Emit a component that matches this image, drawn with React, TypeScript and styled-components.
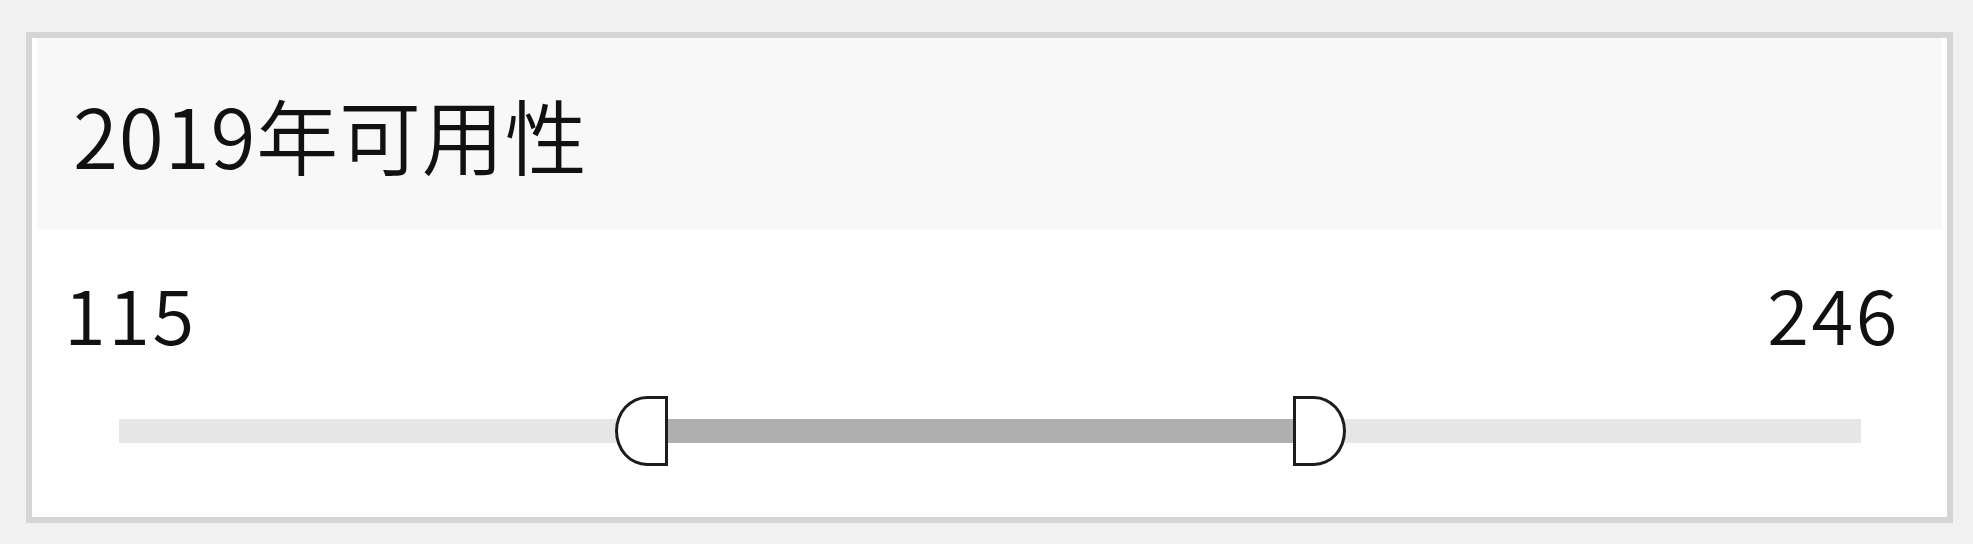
import React from "react";
import styled, { createGlobalStyle } from "styled-components";

const GlobalStyle = createGlobalStyle`
  html, body {
    margin: 0;
    padding: 0;
    background: #f1f1f1;
  }
  body {
    font-family: "Noto Sans CJK SC", "Noto Sans", sans-serif;
    color: #1a1a1a;
  }
`;

const Page = styled.div`
  padding: 32px 20px 21px 26px;
`;

const Panel = styled.section`
  box-sizing: border-box;
  width: 1927px;
  height: 491px;
  border: 6px solid #d5d5d5;
  background: #ffffff;
  padding: 0 5px;
  display: flex;
  flex-direction: column;
`;

const Header = styled.header`
  height: 191px;
  background: #f8f8f8;
  display: flex;
  align-items: center;
  padding-left: 36px;
`;

const Title = styled.h1`
  margin: 0;
  font-family: "Noto Sans CJK SC", sans-serif;
  font-weight: 350;
  font-size: 82px;
  line-height: 1;
  letter-spacing: 0.8px;
  color: #111111;
`;

const Body = styled.div`
  flex: 1;
  padding: 45px 42px 0 27px;
  display: flex;
  flex-direction: column;
`;

const Labels = styled.div`
  display: flex;
  justify-content: space-between;
  align-items: flex-start;
`;

const Value = styled.span`
  font-family: "Noto Sans CJK SC", sans-serif;
  font-weight: 350;
  font-size: 76px;
  line-height: 76px;
  letter-spacing: 2.5px;
  color: #111111;
`;

const SliderArea = styled.div`
  position: relative;
  height: 70px;
  margin: 46px 39px 0 55px;
  display: flex;
  align-items: center;
`;

const Track = styled.div`
  position: relative;
  width: 100%;
  height: 24px;
  background: #e6e6e6;
`;

const Range = styled.div`
  position: absolute;
  top: 0;
  bottom: 0;
  background: #afafaf;
`;

const Handle = styled.div<{ $side: "left" | "right" }>`
  position: absolute;
  top: 0;
  box-sizing: border-box;
  width: 53px;
  height: 70px;
  background: #ffffff;
  border: 3px solid #1c1c1c;
  border-radius: ${(p) =>
    p.$side === "left"
      ? "32px 0 0 32px / 35px 0 0 35px"
      : "0 32px 32px 0 / 0 35px 35px 0"};
`;

const data = { min: 115, max: 246, low: 0.3152, high: 0.6739 };

export default function App() {
  const lowPct = data.low * 100;
  const highPct = data.high * 100;
  return (
    <Page>
      <GlobalStyle />
      <Panel>
        <Header>
          <Title>2019年可用性</Title>
        </Header>
        <Body>
          <Labels>
            <Value>{data.min}</Value>
            <Value>{data.max}</Value>
          </Labels>
          <SliderArea>
            <Track>
              <Range style={{ left: `${lowPct}%`, width: `${highPct - lowPct}%` }} />
            </Track>
            <Handle $side="left" style={{ left: `calc(${lowPct}% - 53px)` }} />
            <Handle $side="right" style={{ left: `${highPct}%` }} />
          </SliderArea>
        </Body>
      </Panel>
    </Page>
  );
}
